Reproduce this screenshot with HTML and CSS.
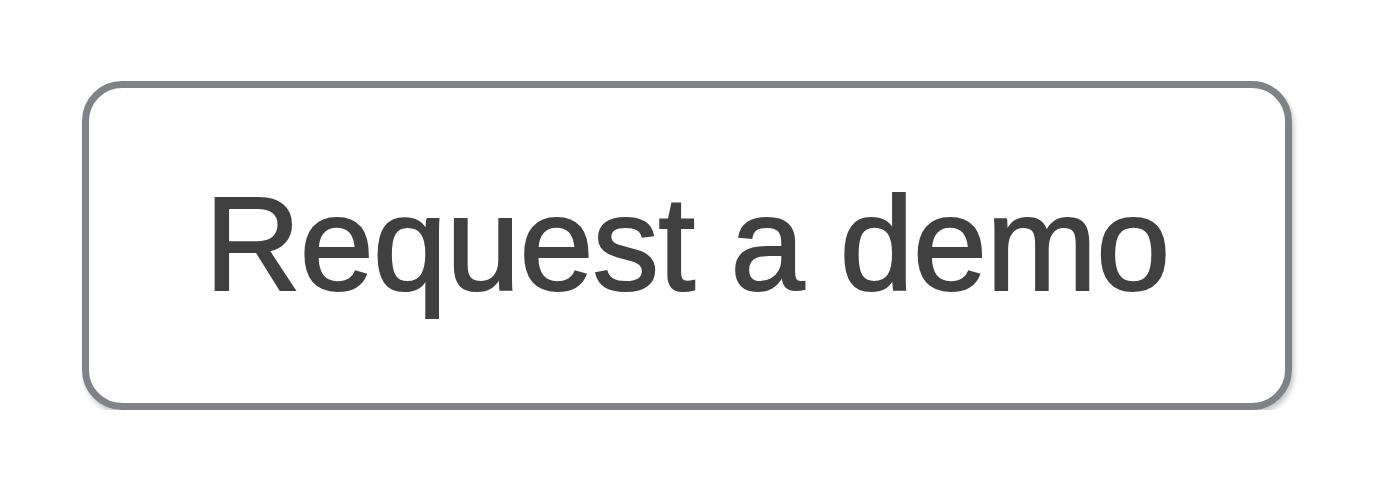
FILE: index.html
```html
<!DOCTYPE html>
<html lang="en">
<head>
    <meta charset="UTF-8">
    <title>Request a demo</title>
    <link rel="stylesheet" href="styles.css">
</head>
<body>
    <div class="wrap">
        <a class="demo-btn" href="#">Request a demo</a>
    </div>
</body>
</html>
```

FILE: styles.css
```css
* {
    margin: 0;
    padding: 0;
    box-sizing: border-box;
}

body {
    background: #fff;
    font-family: 'Liberation Sans', Arial, Helvetica, sans-serif;
}

.wrap {
    padding: 81px 0 0 82px;
}

.demo-btn {
    display: flex;
    align-items: center;
    justify-content: center;
    width: 1210px;
    height: 329px;
    border: 7px solid #7f8388;
    border-radius: 40px;
    box-shadow: 2px 4px 5px rgba(0, 0, 0, 0.22);
    color: #404040;
    font-size: 133px;
    letter-spacing: -0.8px;
    -webkit-text-stroke: 2px #404040;
    text-decoration: none;
    padding-bottom: 4px;
}
```
